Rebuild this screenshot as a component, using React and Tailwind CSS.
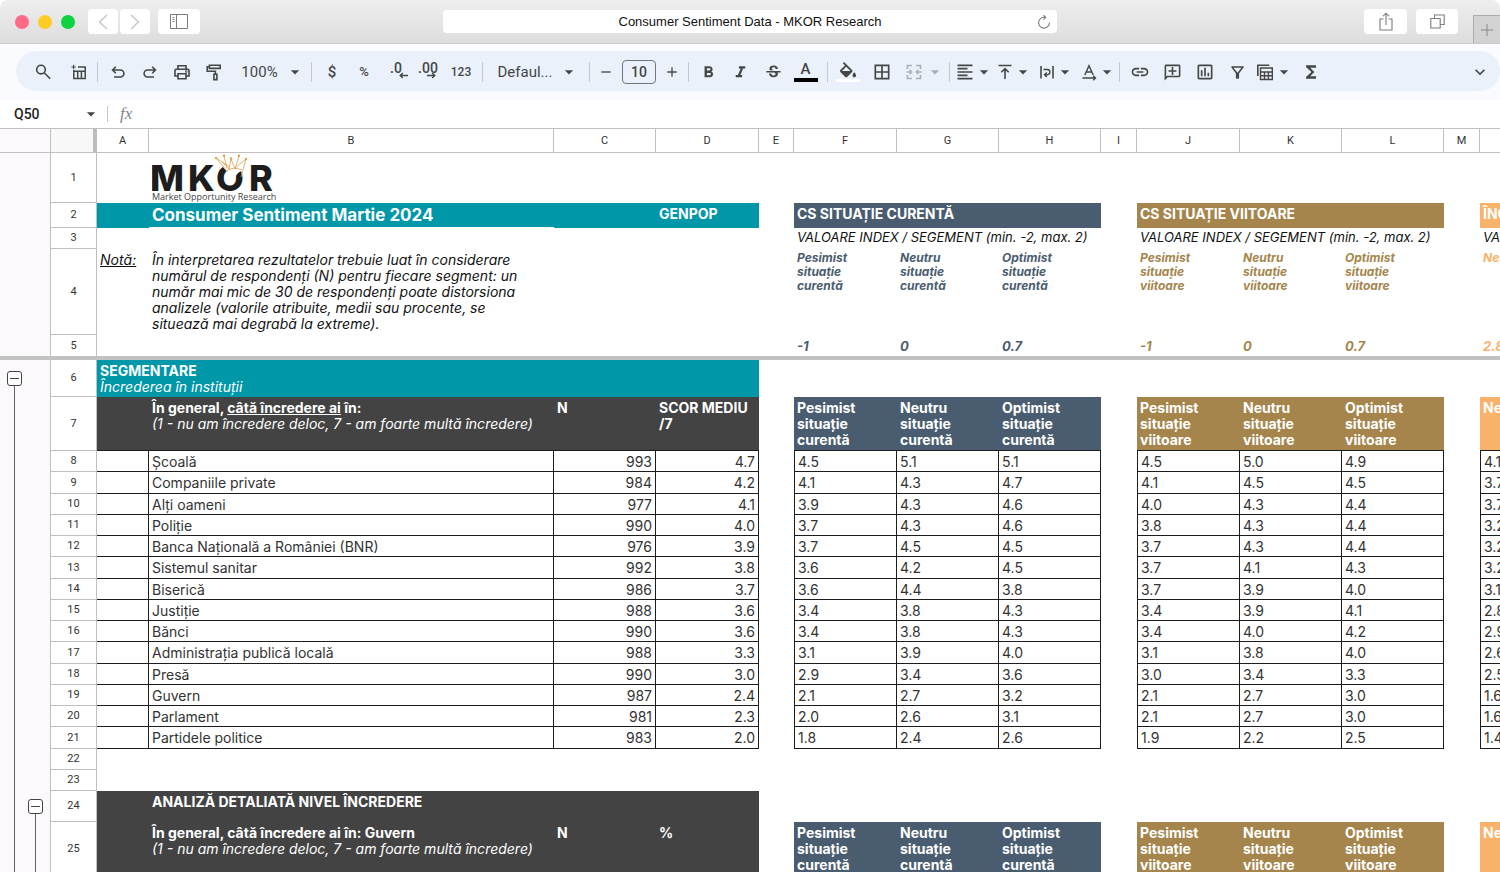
import React from 'react';
import clsx from 'clsx';
import {
  MdAdd, MdArrowDropDown, MdBorderAll, MdFormatAlignLeft, MdFormatBold, MdFormatColorFill, MdFormatItalic,
  MdFunctions, MdKeyboardArrowDown, MdLink, MdOutlineAddComment, MdOutlineFilterAlt, MdOutlineInsertChart,
  MdRemove, MdStrikethroughS,
} from 'react-icons/md';

const COLUMNS = [
  { id: 'A', width: 'w-[52px]' },
  { id: 'B', width: 'w-[405px]' },
  { id: 'C', width: 'w-[102px]' },
  { id: 'D', width: 'w-[103px]' },
  { id: 'E', width: 'w-[35px]' },
  { id: 'F', width: 'w-[103px]' },
  { id: 'G', width: 'w-[102px]' },
  { id: 'H', width: 'w-[102px]' },
  { id: 'I', width: 'w-[36px]' },
  { id: 'J', width: 'w-[103px]' },
  { id: 'K', width: 'w-[102px]' },
  { id: 'L', width: 'w-[102px]' },
  { id: 'M', width: 'w-[36px]' },
  { id: 'N', width: 'w-[102px]' },
];

const INSTITUTIONS = [
  ['Școală', '993', '4.7', '4.5', '5.1', '5.1', '4.5', '5.0', '4.9', '4.1'],
  ['Companiile private', '984', '4.2', '4.1', '4.3', '4.7', '4.1', '4.5', '4.5', '3.7'],
  ['Alți oameni', '977', '4.1', '3.9', '4.3', '4.6', '4.0', '4.3', '4.4', '3.7'],
  ['Poliție', '990', '4.0', '3.7', '4.3', '4.6', '3.8', '4.3', '4.4', '3.2'],
  ['Banca Națională a României (BNR)', '976', '3.9', '3.7', '4.5', '4.5', '3.7', '4.3', '4.4', '3.2'],
  ['Sistemul sanitar', '992', '3.8', '3.6', '4.2', '4.5', '3.7', '4.1', '4.3', '3.2'],
  ['Biserică', '986', '3.7', '3.6', '4.4', '3.8', '3.7', '3.9', '4.0', '3.1'],
  ['Justiție', '988', '3.6', '3.4', '3.8', '4.3', '3.4', '3.9', '4.1', '2.8'],
  ['Bănci', '990', '3.6', '3.4', '3.8', '4.3', '3.4', '4.0', '4.2', '2.9'],
  ['Administrația publică locală', '988', '3.3', '3.1', '3.9', '4.0', '3.1', '3.8', '4.0', '2.6'],
  ['Presă', '990', '3.0', '2.9', '3.4', '3.6', '3.0', '3.4', '3.3', '2.5'],
  ['Guvern', '987', '2.4', '2.1', '2.7', '3.2', '2.1', '2.7', '3.0', '1.6'],
  ['Parlament', '981', '2.3', '2.0', '2.6', '3.1', '2.1', '2.7', '3.0', '1.6'],
  ['Partidele politice', '983', '2.0', '1.8', '2.4', '2.6', '1.9', '2.2', '2.5', '1.4'],
];

const MOODS = ['Pesimist', 'Neutru', 'Optimist'];

/* ---------- toolbar ---------- */

const Glyph = ({ children, size = 18 }) => (
  <svg width={size} height={size} viewBox="0 0 18 18" fill="none" stroke="currentColor" strokeWidth="1.6" aria-hidden="true">
    {children}
  </svg>
);

const Tool = ({ label, className = 'w-8', children }) => (
  <button aria-label={label} className={clsx('flex h-8 shrink-0 items-center justify-center', className)}>
    {children}
  </button>
);

const Divider = () => <span className="h-5 w-px shrink-0 bg-[#c7c7c7]" />;

const Caret = ({ className }) => <MdArrowDropDown size={20} className={clsx('-mx-px shrink-0', className)} />;

const Toolbar = () => (
  <div className="bg-[#f9fbfe] pt-[7px] pb-[9px] pl-4">
    <div className="flex h-10 items-center rounded-full bg-[#ebf1fb] pt-[2px] pl-[11px] font-['Roboto',sans-serif] text-[#444746]">
      <Tool label="Search">
        <Glyph><circle cx="7" cy="6.6" r="4.3" /><path d="M10.2 9.8l6 6" /></Glyph>
      </Tool>
      <Tool label="Insert table" className="ml-1 w-8">
        <Glyph>
          <path d="M3.8 7v8.600h11.400V4H8M3.800 8.200h11.400M7.700 8.200v7.400M11.400 8.200v7.400" strokeWidth="1.500" />
          <path d="M3.600 1.800v4.400M1.400 4h4.400" strokeWidth="1.100" />
        </Glyph>
      </Tool>
      <span className="w-[2px]" />
      <Divider />
      <span className="w-1" />
      <Tool label="Undo">
        <Glyph><path d="M6.8 3.8L3.6 7 6.8 10.2M3.8 7h7.6a3.500 3.500 0 0 1 0 7H5" /></Glyph>
      </Tool>
      <Tool label="Redo">
        <Glyph><path d="M11.2 3.8L14.4 7l-3.2 3.2M14.2 7H6.6a3.500 3.500 0 0 0 0 7H13" /></Glyph>
      </Tool>
      <Tool label="Print">
        <Glyph>
          <path d="M5 6.2V2.8h8v3.4M5 13H2V7.4c0-.7.5-1.2 1.2-1.2h11.6c.7 0 1.2.5 1.2 1.2V13h-3" />
          <path d="M5 10.8h8v5H5z" /><circle cx="13.3" cy="8.5" r=".4" />
        </Glyph>
      </Tool>
      <Tool label="Paint format">
        <Glyph>
          <path d="M4.4 2.2h10.8v3.2H4.4zM4.4 3.8H2.2v4.4h8.2v3" /><path d="M8.9 11.2h3v5.4h-3z" />
        </Glyph>
      </Tool>
      <Tool label="Zoom" className="w-[81px] gap-2 pl-1 text-[15px]">
        100%<Caret />
      </Tool>
      <Divider />
      <span className="w-1" />
      <Tool label="Currency"><span className="text-[15px] font-medium">$</span></Tool>
      <Tool label="Percent"><span className="text-[13px] font-medium">%</span></Tool>
      <Tool label="Decrease decimals">
        <span className="relative -mt-2 text-[14px] font-medium">.0
          <svg className="absolute top-[14px] left-[9px]" width="9" height="7" viewBox="0 0 9 7" fill="none" stroke="currentColor" strokeWidth="1.4"><path d="M9 3.5H1.2M3.8.9L1.2 3.5l2.6 2.6" /></svg>
        </span>
      </Tool>
      <Tool label="Increase decimals">
        <span className="relative -mt-2 text-[14px] font-medium">.00
          <svg className="absolute top-[14px] left-[9px]" width="9" height="7" viewBox="0 0 9 7" fill="none" stroke="currentColor" strokeWidth="1.4"><path d="M0 3.5h7.8M5.2.9l2.6 2.6-2.600 2.600" /></svg>
        </span>
      </Tool>
      <Tool label="More formats" className="w-[34px]"><span className="text-[12px] font-medium">123</span></Tool>
      <span className="w-1" />
      <Divider />
      <Tool label="Font" className="w-[106px] gap-2 pl-1 text-[15px]">
        Defaul...<Caret />
      </Tool>
      <Divider />
      <Tool label="Smaller"><MdRemove size={16} /></Tool>
      <input aria-label="Font size" defaultValue="10" className="h-6 w-[34px] shrink-0 rounded border border-[#747775] bg-transparent text-center text-[14px] font-medium" />
      <Tool label="Larger"><MdAdd size={16} /></Tool>
      <Divider />
      <span className="w-[3px]" />
      <Tool label="Bold"><MdFormatBold size={19} /></Tool>
      <Tool label="Italic" className="w-[33px]"><MdFormatItalic size={19} /></Tool>
      <Tool label="Strikethrough"><MdStrikethroughS size={19} /></Tool>
      <Tool label="Text colour" className="w-[33px] flex-col">
        <span className="text-[15px] leading-[14px] font-medium">A</span>
        <span className="mt-[2px] h-1 w-6 bg-black" />
      </Tool>
      <span className="w-[5px]" />
      <Divider />
      <span className="w-1" />
      <Tool label="Fill colour" className="w-8 flex-col">
        <svg width="18" height="16" viewBox="2 0 20 17.800" fill="currentColor" aria-hidden="true">
          <path d="M16.560 8.940L7.620 0 6.210 1.410l2.380 2.380-5.150 5.150a1.490 1.490 0 0 0 0 2.120l5.500 5.500c.290.290.680.440 1.060.440s.770-.150 1.060-.440l5.500-5.500c.590-.580.590-1.530 0-2.120zM5.210 10L10 5.210 14.790 10zM19 11.500s-2 2.170-2 3.500c0 1.100.900 2 2 2s2-.900 2-2c0-1.330-2-3.500-2-3.500z" />
        </svg>
        <span className="mt-px h-[3px] w-6 bg-white" />
      </Tool>
      <Tool label="Borders" className="w-9"><MdBorderAll size={20} /></Tool>
      <Tool label="Merge cells" className="w-[49px] gap-[3px] text-[#aaaeb3]">
        <Glyph>
          <path d="M7 2.5H2.5V6M11 2.5h4.5V6M7 15.5H2.5V12M11 15.5h4.5V12" />
          <path d="M1.5 9h5M4.6 6.8L6.8 9l-2.2 2.2M16.5 9h-5M13.4 6.8L11.2 9l2.2 2.2" strokeWidth="1.3" />
        </Glyph>
        <Caret />
      </Tool>
      <Divider />
      <Tool label="Horizontal align" className="w-[43px] pl-1"><MdFormatAlignLeft size={20} /><Caret /></Tool>
      <Tool label="Vertical align" className="w-[42px]">
        <Glyph><path d="M2.500 2.500h13M9 16V6M5.300 9.300L9 5.600l3.700 3.700" /></Glyph>
        <Caret />
      </Tool>
      <Tool label="Wrap" className="w-[42px]">
        <Glyph>
          <path d="M3 3v12.500M15 3v12.500" /><path d="M5.500 6.500h3.800a2.600 2.600 0 0 1 0 5.200H6.800M8.800 9.400l-2.300 2.300L8.800 14" strokeWidth="1.400" />
        </Glyph>
        <Caret />
      </Tool>
      <Tool label="Rotate" className="w-[42px]">
        <Glyph>
          <path d="M4.800 12L9 2.800 13.200 12M6.200 9h5.600M2.500 15h12.500M13.200 12.700l2.300 2.300-2.300 2.300" strokeWidth="1.400" />
        </Glyph>
        <Caret />
      </Tool>
      <Divider />
      <span className="w-1" />
      <Tool label="Insert link"><MdLink size={20} /></Tool>
      <Tool label="Insert comment"><MdOutlineAddComment size={19} className="-scale-x-100" /></Tool>
      <Tool label="Insert chart" className="w-[33px]"><MdOutlineInsertChart size={20} /></Tool>
      <Tool label="Filter"><MdOutlineFilterAlt size={19} /></Tool>
      <Tool label="Table views" className="w-[42px] gap-px">
        <Glyph>
          <path d="M1.800 13V2.200h11.500" />
          <path d="M4.500 5h11.800v11.500H4.500zM4.500 9h11.800M4.500 12.700h11.800M8.500 9v7.500M12.400 9v7.500" strokeWidth="1.400" />
        </Glyph>
        <Caret />
      </Tool>
      <Tool label="Functions"><MdFunctions size={20} /></Tool>
      <span className="grow" />
      <Tool label="Collapse" className="mr-1 w-8"><MdKeyboardArrowDown size={20} /></Tool>
    </div>
  </div>
);

/* ---------- browser window ---------- */

const ChromeButton = ({ label, className, children }) => (
  <button aria-label={label} className={clsx('flex h-[25px] items-center justify-center rounded bg-white', className)}>{children}</button>
);

const BrowserBar = () => (
  <header className="grid h-11 shrink-0 grid-cols-[1fr_614px_1fr] items-center rounded-t-lg border-b border-[#c9c9c9] bg-linear-to-b from-[#eeeeee] to-[#dddddd]">
    <div className="flex items-center pl-[15px]">
      <div className="flex items-center gap-[9px]">
        <span className="size-[14px] rounded-full bg-[#ff6b85]" />
        <span className="size-[14px] rounded-full bg-[#ffcc25]" />
        <span className="size-[14px] rounded-full bg-[#0cd33f]" />
      </div>
      <ChromeButton label="Back" className="ml-[13px] w-[30px]">
        <svg width="10" height="16" viewBox="0 0 10 16" fill="none" stroke="#c4c4c4" strokeWidth="1.3"><path d="M9 1L1.5 8 9 15" /></svg>
      </ChromeButton>
      <ChromeButton label="Forward" className="ml-[2px] w-[30px]">
        <svg width="10" height="16" viewBox="0 0 10 16" fill="none" stroke="#c4c4c4" strokeWidth="1.3"><path d="M1 1l7.5 7L1 15" /></svg>
      </ChromeButton>
      <ChromeButton label="Sidebar" className="ml-2 w-[42px]">
        <svg width="18" height="15" viewBox="0 0 18 15" fill="none" stroke="#7c7c7c"><path d="M.5.5h17v14H.5zM6.5.5v14M2.5 3.5h2M2.5 5.5h2M2.5 7.5h2" /></svg>
      </ChromeButton>
    </div>
    <div className="flex h-[23px] items-center rounded bg-white px-[6px]">
      <span className="grow pl-[14px] text-center font-['Liberation_Sans',sans-serif] text-[13px] text-[#111]">Consumer Sentiment Data - MKOR Research</span>
      <button aria-label="Reload">
        <svg width="14" height="14" viewBox="0 0 14 14" fill="none" stroke="#7c7c7c" strokeWidth="1.1"><path d="M12.4 7.5A5.4 5.4 0 1 1 7 2.300h1.500M6.400.200l2.300 2.100-2.300 2.300" /></svg>
      </button>
    </div>
    <div className="flex h-full items-center justify-end">
      <ChromeButton label="Share" className="w-[43px]">
        <svg width="14" height="19" viewBox="0 0 14 19" fill="none" stroke="#7c7c7c" strokeWidth="1.1"><path d="M4.5 7H1v11h12V7H9.5M7 13V1.2M4 4.2l3-3 3 3" /></svg>
      </ChromeButton>
      <ChromeButton label="Show tabs" className="mr-[15px] ml-[9px] w-[42px]">
        <svg width="15" height="15" viewBox="0 0 15 15" fill="none" stroke="#7c7c7c" strokeWidth="1.1"><path d="M.8 4.5h9.4V14H.8zM4.500 4V1h9.700v9.500h-3.700" /></svg>
      </ChromeButton>
      <button aria-label="New tab" className="flex h-7 w-[27px] items-center justify-center self-end border-t border-l border-[#adadad] bg-[#d2d2d2]">
        <svg width="12" height="12" viewBox="0 0 12 12" stroke="#8a8a8a"><path d="M6 0v12M0 6h12" /></svg>
      </button>
    </div>
  </header>
);

const FormulaBar = () => (
  <div className="flex h-[29px] shrink-0 items-center border-b border-[#c0c0c0] bg-white">
    <input aria-label="Cell" defaultValue="Q50" className="w-[68px] shrink-0 pl-[14px] font-['Roboto',sans-serif] text-[14px] font-medium text-[#1f1f1f]" />
    <button aria-label="Named ranges" className="ml-[14px] text-[#444746]"><Caret /></button>
    <span className="ml-[7px] h-4 w-px bg-[#c7c7c7]" />
    <label htmlFor="formula" className="ml-[12px] font-['Liberation_Serif',serif] text-[17px] text-[#80868b] italic">fx</label>
    <input id="formula" className="ml-2 grow outline-none" />
  </div>
);

/* ---------- sheet ---------- */

const Logo = () => (
  <svg width="126" height="48" viewBox="0 0 126 48" role="img" aria-label="MKOR Market Opportunity Research">
    <text y="37" fontFamily="Inter, sans-serif" fontWeight="800" fontSize="36" fill="#1d1d1d">
      <tspan x="-2">M</tspan><tspan x="36">K</tspan><tspan x="64">O</tspan><tspan x="97">R</tspan>
    </text>
    <path d="M67 8h26l2 5-9 6-3 4h-5l-3-5z" fill="#fff" />
    <g fill="none" stroke="#d9a04e" strokeWidth=".8">
      <path d="M64 4l11 13M64 4l14 9M70 8l8 8M72 2l3 12M79 5l-2 10M79 5l4 10M87 2l-4 13M94 5l-11 9M94 5l-5 18" />
      <path d="M75 17q6-5 15-1" />
    </g>
    <g fill="#d9a04e">
      <circle cx="64" cy="4" r="1.200" /><circle cx="72" cy="1.800" r="1.200" /><circle cx="79" cy="4.500" r="1.200" />
      <circle cx="87" cy="1.800" r="1.200" /><circle cx="94" cy="5" r="1.200" />
    </g>
    <text x="0" y="46" fontFamily="Open Sans, sans-serif" fontSize="9" fill="#444">Market Opportunity Research</text>
  </svg>
);

const RowHead = ({ n, className }) => (
  <th scope="row" className={clsx("border-r border-b border-[#c0c0c0] bg-white p-0 text-center align-middle font-['Roboto',sans-serif] text-[11px] font-normal text-[#333]", className)}>{n}</th>
);

const Cell = ({ className = '', children, ...rest }) => (
  <td className={clsx('px-[3px] align-top whitespace-nowrap', className)} {...rest}>{children}</td>
);

const MoodHeads = ({ when, className }) => MOODS.map((mood) => (
  <Cell key={mood} className={className}>{mood}<br />situație<br />{when}</Cell>
));

const Values = ({ values, className }) => values.map((v, i) => (
  <Cell key={i} className={className}>{v}</Cell>
));

const DataCell = ({ left, right, children }) => (
  <td className={clsx('border-r border-b border-[#1c1c1c] px-[3px] pt-px pb-0 align-middle whitespace-nowrap', left && 'border-l', right && 'text-right')}>{children}</td>
);

const DataRow = ({ n, row }) => {
  const [name, count, score, ...scores] = row;
  return (
    <tr className={n % 4 === 1 ? 'h-[22px]' : 'h-[21px]'}>
      <RowHead n={n} />
      <DataCell />
      <DataCell>{name}</DataCell>
      <DataCell right>{count}</DataCell>
      <DataCell right>{score}</DataCell>
      <td />
      {scores.slice(0, 3).map((v, i) => <DataCell key={i} left={i === 0}>{v}</DataCell>)}
      <td />
      {scores.slice(3, 6).map((v, i) => <DataCell key={i} left={i === 0}>{v}</DataCell>)}
      <td />
      <DataCell left>{scores[6]}</DataCell>
    </tr>
  );
};

const Sheet = () => (
  <table className="w-[1531px] shrink-0 table-fixed border-separate border-spacing-0 bg-white font-['Inter',sans-serif] text-[14px] leading-4 text-[#333]">
    <colgroup>
      <col className="w-[46px]" />
      {COLUMNS.map((c) => <col key={c.id} className={c.width} />)}
    </colgroup>
    <thead>
      <tr className="h-6">
        <th aria-label="Select all" className="border-r-4 border-b border-r-[#bdbdbd] border-b-[#c0c0c0] bg-[#f8f8f8] p-0" />
        {COLUMNS.map((c) => (
          <th key={c.id} scope="col" className="border-r border-b border-[#c0c0c0] p-0 font-['Roboto',sans-serif] text-[11px] font-normal text-[#333]">{c.id}</th>
        ))}
      </tr>
    </thead>
    <tbody>
      <tr className="h-[50px]">
        <RowHead n={1} />
        <td />
        <Cell className="py-px"><Logo /></Cell>
        <td colSpan={12} />
      </tr>
      <tr className="h-[25px] font-bold text-white">
        <RowHead n={2} />
        <td className="bg-[#0097a9]" />
        <Cell className="border-b border-white bg-[#0097a9] pt-1 text-[17px]">Consumer Sentiment Martie 2024</Cell>
        <td className="bg-[#0097a9]" />
        <Cell className="bg-[#0097a9] pt-[3px]">GENPOP</Cell>
        <td />
        <Cell colSpan={3} className="bg-[#4a5d70] pt-[3px]">CS SITUAȚIE CURENTĂ</Cell>
        <td />
        <Cell colSpan={3} className="bg-[#a5854b] pt-[3px]">CS SITUAȚIE VIITOARE</Cell>
        <td />
        <Cell className="bg-[#f8b26a] pt-[3px]">ÎNC</Cell>
      </tr>
      <tr className="h-[21px] text-[13px] text-[#111] italic">
        <RowHead n={3} className="not-italic" />
        <td colSpan={5} />
        <Cell colSpan={3} className="pt-px">VALOARE INDEX / SEGEMENT (min. -2, max. 2)</Cell>
        <td />
        <Cell colSpan={3} className="pt-px">VALOARE INDEX / SEGEMENT (min. -2, max. 2)</Cell>
        <td />
        <Cell className="pt-px">VALOARE</Cell>
      </tr>
      <tr className="h-[86px] text-[#111] italic">
        <RowHead n={4} className="not-italic" />
        <Cell className="pt-[3px] underline">Notă:</Cell>
        <Cell className="pt-[3px]">
          În interpretarea rezultatelor trebuie luat în considerare<br />
          numărul de respondenți (N) pentru fiecare segment: un<br />
          număr mai mic de 30 de respondenți poate distorsiona<br />
          analizele (valorile atribuite, medii sau procente, se<br />
          situează mai degrabă la extreme).
        </Cell>
        <td colSpan={3} />
        <MoodHeads when="curentă" className="pt-[2px] text-[12px] leading-[14px] font-bold text-[#4a5d70]" />
        <td />
        <MoodHeads when="viitoare" className="pt-[2px] text-[12px] leading-[14px] font-bold text-[#a5854b]" />
        <td />
        <Cell className="pt-[2px] text-[12px] leading-[14px] font-bold text-[#f8b26a]">Neutru</Cell>
      </tr>
      <tr className="h-[21px] font-bold italic">
        <RowHead n={5} className="border-b-0 not-italic" />
        <td colSpan={5} />
        <Values values={['-1', '0', '0.7']} className="pt-[3px] text-[13px] text-[#4a5d70]" />
        <td />
        <Values values={['-1', '0', '0.7']} className="pt-[3px] text-[13px] text-[#a5854b]" />
        <td />
        <Cell className="pt-[3px] text-[13px] text-[#f8b26a]">2.8</Cell>
      </tr>
      <tr className="h-1"><td colSpan={15} className="h-1 bg-[#c2c2c2] p-0" /></tr>
      <tr className="h-[37px] text-white">
        <RowHead n={6} />
        <Cell colSpan={4} className="bg-[#0097a9] pt-[3px]"><b>SEGMENTARE</b><br /><i>Încrederea în instituții</i></Cell>
        <td colSpan={10} />
      </tr>
      <tr className="h-[54px] font-bold text-white">
        <RowHead n={7} />
        <td className="border-b border-[#1c1c1c] bg-[#434343]" />
        <Cell className="border-b border-[#1c1c1c] bg-[#434343] pt-[3px]">
          În general, <u>câtă încredere ai</u> în:<br />
          <i className="font-normal">(1 - nu am încredere deloc, 7 - am foarte multă încredere)</i>
        </Cell>
        <Cell className="border-b border-[#1c1c1c] bg-[#434343] pt-[3px]">N</Cell>
        <Cell className="border-b border-[#1c1c1c] bg-[#434343] pt-[3px]">SCOR MEDIU<br />/7</Cell>
        <td />
        <MoodHeads when="curentă" className="border-b border-[#1c1c1c] bg-[#4a5d70] pt-[3px]" />
        <td />
        <MoodHeads when="viitoare" className="border-b border-[#1c1c1c] bg-[#a5854b] pt-[3px]" />
        <td />
        <Cell className="border-b border-[#1c1c1c] bg-[#f8b26a] pt-[3px]">Neutru</Cell>
      </tr>
      {INSTITUTIONS.map((row, i) => <DataRow key={row[0]} n={i + 8} row={row} />)}
      <tr className="h-[21px]"><RowHead n={22} /><td colSpan={14} /></tr>
      <tr className="h-[21px]"><RowHead n={23} /><td colSpan={14} /></tr>
      <tr className="h-[31px] font-bold text-white">
        <RowHead n={24} />
        <td className="bg-[#434343]" />
        <Cell colSpan={3} className="bg-[#434343] pt-[3px]">ANALIZĂ DETALIATĂ NIVEL ÎNCREDERE</Cell>
        <td colSpan={10} />
      </tr>
      <tr className="h-[54px] font-bold text-white">
        <RowHead n={25} />
        <td className="bg-[#434343]" />
        <Cell className="bg-[#434343] pt-[3px]">
          În general, câtă încredere ai în: Guvern<br />
          <i className="font-normal">(1 - nu am încredere deloc, 7 - am foarte multă încredere)</i>
        </Cell>
        <Cell className="bg-[#434343] pt-[3px]">N</Cell>
        <Cell className="bg-[#434343] pt-[3px]">%</Cell>
        <td />
        <MoodHeads when="curentă" className="bg-[#4a5d70] pt-[3px]" />
        <td />
        <MoodHeads when="viitoare" className="bg-[#a5854b] pt-[3px]" />
        <td />
        <Cell className="bg-[#f8b26a] pt-[3px]">Neutru</Cell>
      </tr>
    </tbody>
  </table>
);

const GroupTrack = ({ label, className }) => (
  <div className={clsx('flex w-[15px] flex-col items-center', className)}>
    <button aria-label={label} className="flex size-[15px] shrink-0 items-center justify-center rounded-[3px] border border-[#444] bg-white">
      <span className="h-px w-[9px] bg-[#444]" />
    </button>
    <span className="w-px grow bg-[#5f6368]" />
  </div>
);

const OutlineGutter = () => (
  <div className="flex w-[51px] shrink-0 flex-col bg-[#fbf9fb]">
    <div className="h-6 shrink-0 border-r border-b border-[#c0c0c0]" />
    <div className="h-[203px] shrink-0 border-r border-[#c0c0c0]" />
    <div className="h-1 shrink-0 bg-[#c2c2c2]" />
    <div className="flex grow gap-[6px] border-r border-[#c0c0c0] pl-[7px]">
      <GroupTrack label="Collapse rows 6 and below" className="pt-[11px]" />
      <GroupTrack label="Collapse rows 24 and below" className="pt-[439px]" />
    </div>
  </div>
);

export default function App() {
  return (
    <div className="flex h-screen flex-col overflow-hidden bg-white">
      <BrowserBar />
      <Toolbar />
      <FormulaBar />
      <main className="flex min-h-0 grow overflow-hidden">
        <OutlineGutter />
        <Sheet />
      </main>
    </div>
  );
}
